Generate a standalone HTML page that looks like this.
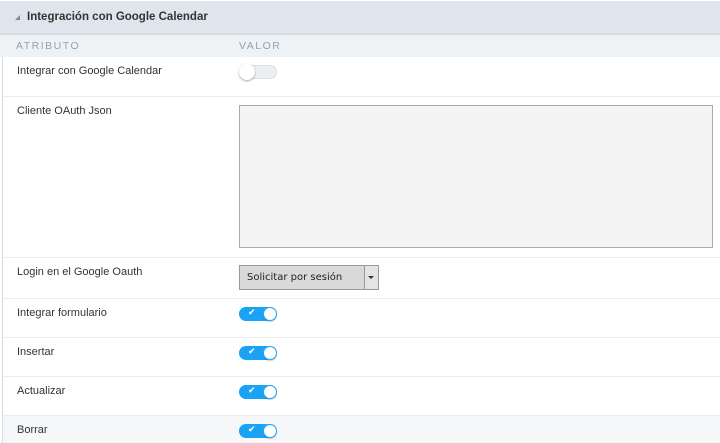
<!DOCTYPE html>
<html><head><style>
body{margin:0;width:720px;height:443px;overflow:hidden;background:#fff;font-family:"Liberation Sans",Arial,sans-serif;position:relative}
.hdr{position:absolute;left:0;top:1px;width:720px;height:32px;background:#dfe5ec;border-bottom:2px solid #d2dce2;}
.hdr span{position:absolute;left:27px;top:10px;font-size:11.5px;font-weight:bold;color:#333}
.hdr i{position:absolute;left:15px;top:14px;width:0;height:0;border-left:5px solid transparent;border-bottom:5px solid #888}
.ch{position:absolute;left:0;top:35px;width:720px;height:22px;background:#eef2f5;font-size:10.5px;letter-spacing:1.5px;color:#8fa3b0}
.ch span{position:absolute;top:5px}
.lb{position:absolute;left:2px;top:57px;width:1px;height:386px;background:#d5dee5}
.row{position:absolute;left:3px;width:717px;border-bottom:1px solid #e6ecf0}
.row .l{position:absolute;left:14px;top:8px;font-size:11px;color:#333}
.tg{position:absolute;left:236px;top:8px;width:38px;height:14px;border-radius:8px;background:#1aa3f5}
.tg:after{content:"";position:absolute;right:0;top:0;width:14px;height:14px;border-radius:50%;background:#fff;box-shadow:0 0 0 1px #1aa3f5 inset, 0 1px 1px rgba(0,0,0,.2)}
.tg b{position:absolute;left:9px;top:0;line-height:12px;color:#fff;font-size:9px;font-family:"DejaVu Sans",sans-serif}
.off{position:absolute;left:236px;top:8px;width:38px;height:14px;border-radius:8px;background:#eceff1;border:1px solid #dde2e5;box-sizing:border-box}
.off:after{content:"";position:absolute;left:-1px;top:-2px;width:16px;height:16px;border-radius:50%;background:#fff;box-shadow:0 1px 2px rgba(0,0,0,.35)}
</style></head><body>
<div class="hdr"><i></i><span>Integración con Google Calendar</span></div>
<div class="ch"><span style="left:16px">ATRIBUTO</span><span style="left:239px">VALOR</span></div>
<div class="lb"></div>
<div class="row" style="top:57px;height:39px"><div class="l">Integrar con Google Calendar</div><div class="off"></div></div>
<div class="row" style="top:97px;height:160px"><div class="l">Cliente OAuth Json</div>
<div style="position:absolute;left:236px;top:8px;width:474px;height:143px;background:#f4f4f4;border:1px solid #aaa;box-sizing:border-box"></div></div>
<div class="row" style="top:258px;height:40px"><div class="l">Login en el Google Oauth</div>
<div style="position:absolute;left:236px;top:7px;width:140px;height:25px;background:#d9d9d9;border:1px solid #999;box-sizing:border-box;font-family:'DejaVu Sans',sans-serif;font-size:10px;color:#222;line-height:23px;padding-left:7px">Solicitar por sesión<span style="position:absolute;right:0;top:0;width:13px;height:23px;border-left:1px solid #999;background:#e4e4e4"></span><span style="position:absolute;right:4px;top:10px;border-left:3px solid transparent;border-right:3px solid transparent;border-top:3px solid #333"></span></div></div>
<div class="row" style="top:299px;height:38px"><div class="l">Integrar formulario</div><div class="tg"><b>✔</b></div></div>
<div class="row" style="top:338px;height:38px"><div class="l">Insertar</div><div class="tg"><b>✔</b></div></div>
<div class="row" style="top:377px;height:38px"><div class="l">Actualizar</div><div class="tg"><b>✔</b></div></div>
<div class="row" style="top:416px;height:27px;background:#f5f7f9;border:0"><div class="l">Borrar</div><div class="tg"><b>✔</b></div></div>
</body></html>
